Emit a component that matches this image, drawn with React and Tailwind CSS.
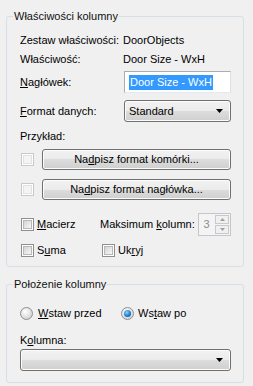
import React from "react";

const btnBg =
  "bg-[linear-gradient(to_bottom,#f2f2f2_0%,#ebebeb_50%,#dddddd_50%,#cfcfcf_100%)]";

function Arrow() {
  return (
    <svg width="7" height="4" viewBox="0 0 7 4" className="block">
      <path d="M0 0h7L3.5 4z" fill="#000" />
    </svg>
  );
}

function Check({ disabled }) {
  return (
    <span
      className={
        "block w-[13px] h-[13px] shrink-0 border p-[1px] bg-white " +
        (disabled ? "border-[#c9c9c9]" : "border-[#8f8f8f]")
      }
    >
      <span
        className={
          "block w-full h-full " +
          (disabled
            ? "bg-[#f4f4f4] border border-[#e2e2e2]"
            : "bg-[linear-gradient(135deg,#d4d4d4,#f7f7f7)] border border-[#b8b8b8]")
        }
      />
    </span>
  );
}

function Radio({ checked }) {
  return (
    <span className="flex items-center justify-center w-[13px] h-[13px] shrink-0 rounded-full border border-[#8f8f8f] bg-[radial-gradient(circle_at_40%_35%,#ffffff,#d7d7d7_70%,#c6c6c6)]">
      {checked && (
        <span className="block w-[7px] h-[7px] rounded-full bg-[radial-gradient(circle_at_40%_35%,#8cd3ff,#1a7fd0_55%,#0b3f85)]" />
      )}
    </span>
  );
}

function Select({ value, className }) {
  return (
    <div
      className={
        "flex items-center justify-between h-[22px] rounded-[3px] border border-[#707070] pl-[4px] pr-[7px] shadow-[inset_0_0_0_1px_#fcfcfc] " +
        btnBg +
        " " +
        className
      }
    >
      <span>{value}</span>
      <Arrow />
    </div>
  );
}

function Button({ children }) {
  return (
    <div
      className={
        "flex-1 flex items-center justify-center h-[21px] rounded-[3px] border border-[#707070] shadow-[inset_0_0_0_1px_#fcfcfc] " +
        btnBg
      }
    >
      {children}
    </div>
  );
}

export default function App() {
  return (
    <div className="w-[253px] h-[386px] bg-[#f0f0f0] pt-[9px] pl-[6px] text-[11px] text-[#000] font-['Liberation_Sans',Arial,sans-serif] leading-[15px]">
      <fieldset className="w-[238px] h-[258px] border border-[#d5dfe5] rounded-[3px]">
        <legend className="ml-[6px] px-[1px] leading-[15px] text-[#111]">
          Właściwości kolumny
        </legend>
        <div className="flex flex-col pl-[13px] pr-[12px] pt-[7px]">
          <div className="flex items-center h-[19px]">
            <span className="w-[103px]">Zestaw właściwości:</span>
            <span>DoorObjects</span>
          </div>
          <div className="flex items-center h-[19px]">
            <span className="w-[103px]">Właściwość:</span>
            <span>Door Size - WxH</span>
          </div>
          <div className="flex items-center h-[22px] mt-[2px]">
            <span className="w-[104px]">
              <u>N</u>agłówek:
            </span>
            <div className="flex items-center flex-1 h-[22px] bg-white border border-[#abadb3] border-r-[#dbdfe6] border-b-[#e3e9ef] pl-[4px]">
              <span className="bg-[#3399ff] text-white px-[1px] leading-[15px]">
                Door Size - WxH
              </span>
            </div>
          </div>
          <div className="flex items-center h-[22px] mt-[7px]">
            <span className="w-[104px]">
              <u>F</u>ormat danych:
            </span>
            <Select value="Standard" className="flex-1" />
          </div>
          <div className="flex items-center h-[16px] mt-[6px]">
            <span>Przykład:</span>
          </div>
          <div className="flex items-center h-[21px] mt-[5px] gap-[8px] pl-[1px]">
            <Check disabled />
            <Button>
              Na<u>d</u>pisz format komórki...
            </Button>
          </div>
          <div className="flex items-center h-[21px] mt-[9px] gap-[8px] pl-[1px]">
            <Check disabled />
            <Button>
              Na<u>d</u>pisz format nagłówka...
            </Button>
          </div>
          <div className="flex items-center h-[23px] mt-[13px] pl-[1px]">
            <span className="flex items-center gap-[3px] w-[79px]">
              <Check />
              <span>
                <u>M</u>acierz
              </span>
            </span>
            <span>
              Maksimum <u>k</u>olumn:
            </span>
            <div className="ml-auto flex w-[33px] h-[23px] border border-[#c3c6ca] bg-[#f4f4f4]">
              <span className="flex-1 flex items-center justify-center text-[#8d8d8d]">
                3
              </span>
              <div className="flex flex-col w-[16px] p-[1px] gap-[1px]">
                <div className="flex-1 flex items-center justify-center border border-[#c9c9c9] bg-[#f0f0f0]">
                  <svg width="5" height="3" viewBox="0 0 5 3">
                    <path d="M0 3h5L2.5 0z" fill="#a0a0a0" />
                  </svg>
                </div>
                <div className="flex-1 flex items-center justify-center border border-[#c9c9c9] bg-[#f0f0f0]">
                  <svg width="5" height="3" viewBox="0 0 5 3">
                    <path d="M0 0h5L2.5 3z" fill="#a0a0a0" />
                  </svg>
                </div>
              </div>
            </div>
          </div>
          <div className="flex items-center h-[16px] mt-[6px] pl-[1px]">
            <span className="flex items-center gap-[3px] w-[81px]">
              <Check />
              <span>
                S<u>u</u>ma
              </span>
            </span>
            <span className="flex items-center gap-[3px]">
              <Check />
              <span>
                Uk<u>r</u>yj
              </span>
            </span>
          </div>
        </div>
      </fieldset>

      <fieldset className="w-[238px] h-[106px] mt-[10px] border border-[#d5dfe5] rounded-[3px]">
        <legend className="ml-[6px] px-[1px] leading-[15px] text-[#111]">
          Położenie kolumny
        </legend>
        <div className="flex flex-col pl-[13px] pr-[12px] pt-[13px]">
          <div className="flex items-center h-[16px]">
            <span className="flex items-center gap-[5px] w-[101px]">
              <Radio />
              <span>
                <u>W</u>staw przed
              </span>
            </span>
            <span className="flex items-center gap-[4px]">
              <Radio checked />
              <span>
                Ws<u>t</u>aw po
              </span>
            </span>
          </div>
          <div className="flex items-center h-[16px] mt-[11px]">
            <span>
              K<u>o</u>lumna:
            </span>
          </div>
          <Select value="" className="mt-[1px]" />
        </div>
      </fieldset>
    </div>
  );
}
